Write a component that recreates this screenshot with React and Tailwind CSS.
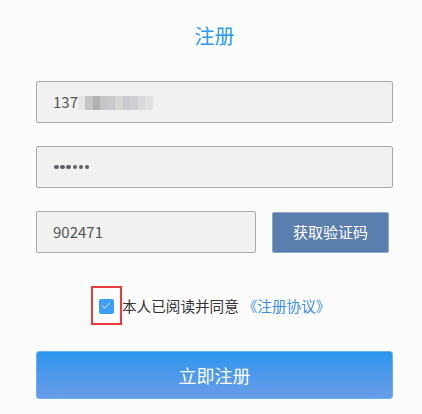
import { Check } from 'lucide-react';

const font = { fontFamily: '"Noto Sans CJK SC", "Noto Sans", sans-serif' };

// blurred tail of the phone number
const blur = ['#e6e6e6', '#c5c5c7', '#b1b1b3', '#c6c6c8', '#c9c9cb', '#d5d6d1', '#cacacf', '#cfd0d4', '#dadadc', '#e1e1e1'];

export default function App() {
  return (
    <div className="w-[422px] h-[414px] bg-[#fcfcfc] text-[#333]" style={font}>
      <div className="ml-[36px] w-[357px] flex flex-col">
        {/* Title */}
        <h1 className="text-center text-[20px] leading-[28px] text-[#2b9af0] pt-[22px]">注册</h1>

        {/* Phone */}
        <div className="mt-[31px] h-[42px] bg-[#f1f1f1] border border-[#a9a9ab] rounded-[2px] flex items-center pl-[16px] text-[15px] text-[#555]">
          <span>137</span>
          <div className="flex h-[14px] mt-[1px]">
            {blur.map((c, i) => (
              <div key={i} className="w-[7.5px] h-full" style={{ backgroundColor: c }}></div>
            ))}
          </div>
        </div>

        {/* Password */}
        <div className="mt-[23px] h-[42px] bg-[#f1f1f1] border border-[#a9a9ab] rounded-[2px] flex items-center pl-[17px] gap-[1.7px]">
          {[0, 1, 2, 3, 4, 5].map((i) => (
            <div key={i} className="w-[4.5px] h-[4.5px] rounded-full bg-[#5f5f66]"></div>
          ))}
        </div>

        {/* Code */}
        <div className="mt-[23px] flex items-center gap-[16px]">
          <div className="w-[220px] h-[42px] bg-[#f1f1f1] border border-[#a9a9ab] rounded-[2px] flex items-center pl-[16px] text-[15px] text-[#555]">
            902471
          </div>
          <button className="w-[117px] h-[41px] bg-[#5a7eae] border border-[#8ea7c8] rounded-[2px] text-white text-[15px]">
            获取验证码
          </button>
        </div>

        {/* Agreement */}
        <div className="mt-[33px] flex items-center pl-[55px] text-[14.6px]">
          <div className="w-[31px] h-[39px] border-2 border-[#e83a3a] flex items-center justify-center">
            <div className="w-[15px] h-[15px] rounded-[2px] bg-[#3f9ff5] flex items-center justify-center ml-[-1px] mt-[1px]">
              <Check className="w-[10px] h-[10px] text-white" strokeWidth={2} />
            </div>
          </div>
          <span className="text-[#333]">本人已阅读并同意</span>
          <span className="text-[#3a8ee6] ml-[4px]">《注册协议》</span>
        </div>

        {/* Submit */}
        <button className="mt-[26px] h-[48px] rounded-[3px] border border-[#6cb1f5] bg-gradient-to-b from-[#2895ee] to-[#679ce8] text-white text-[18px]">
          立即注册
        </button>
      </div>
    </div>
  );
}
